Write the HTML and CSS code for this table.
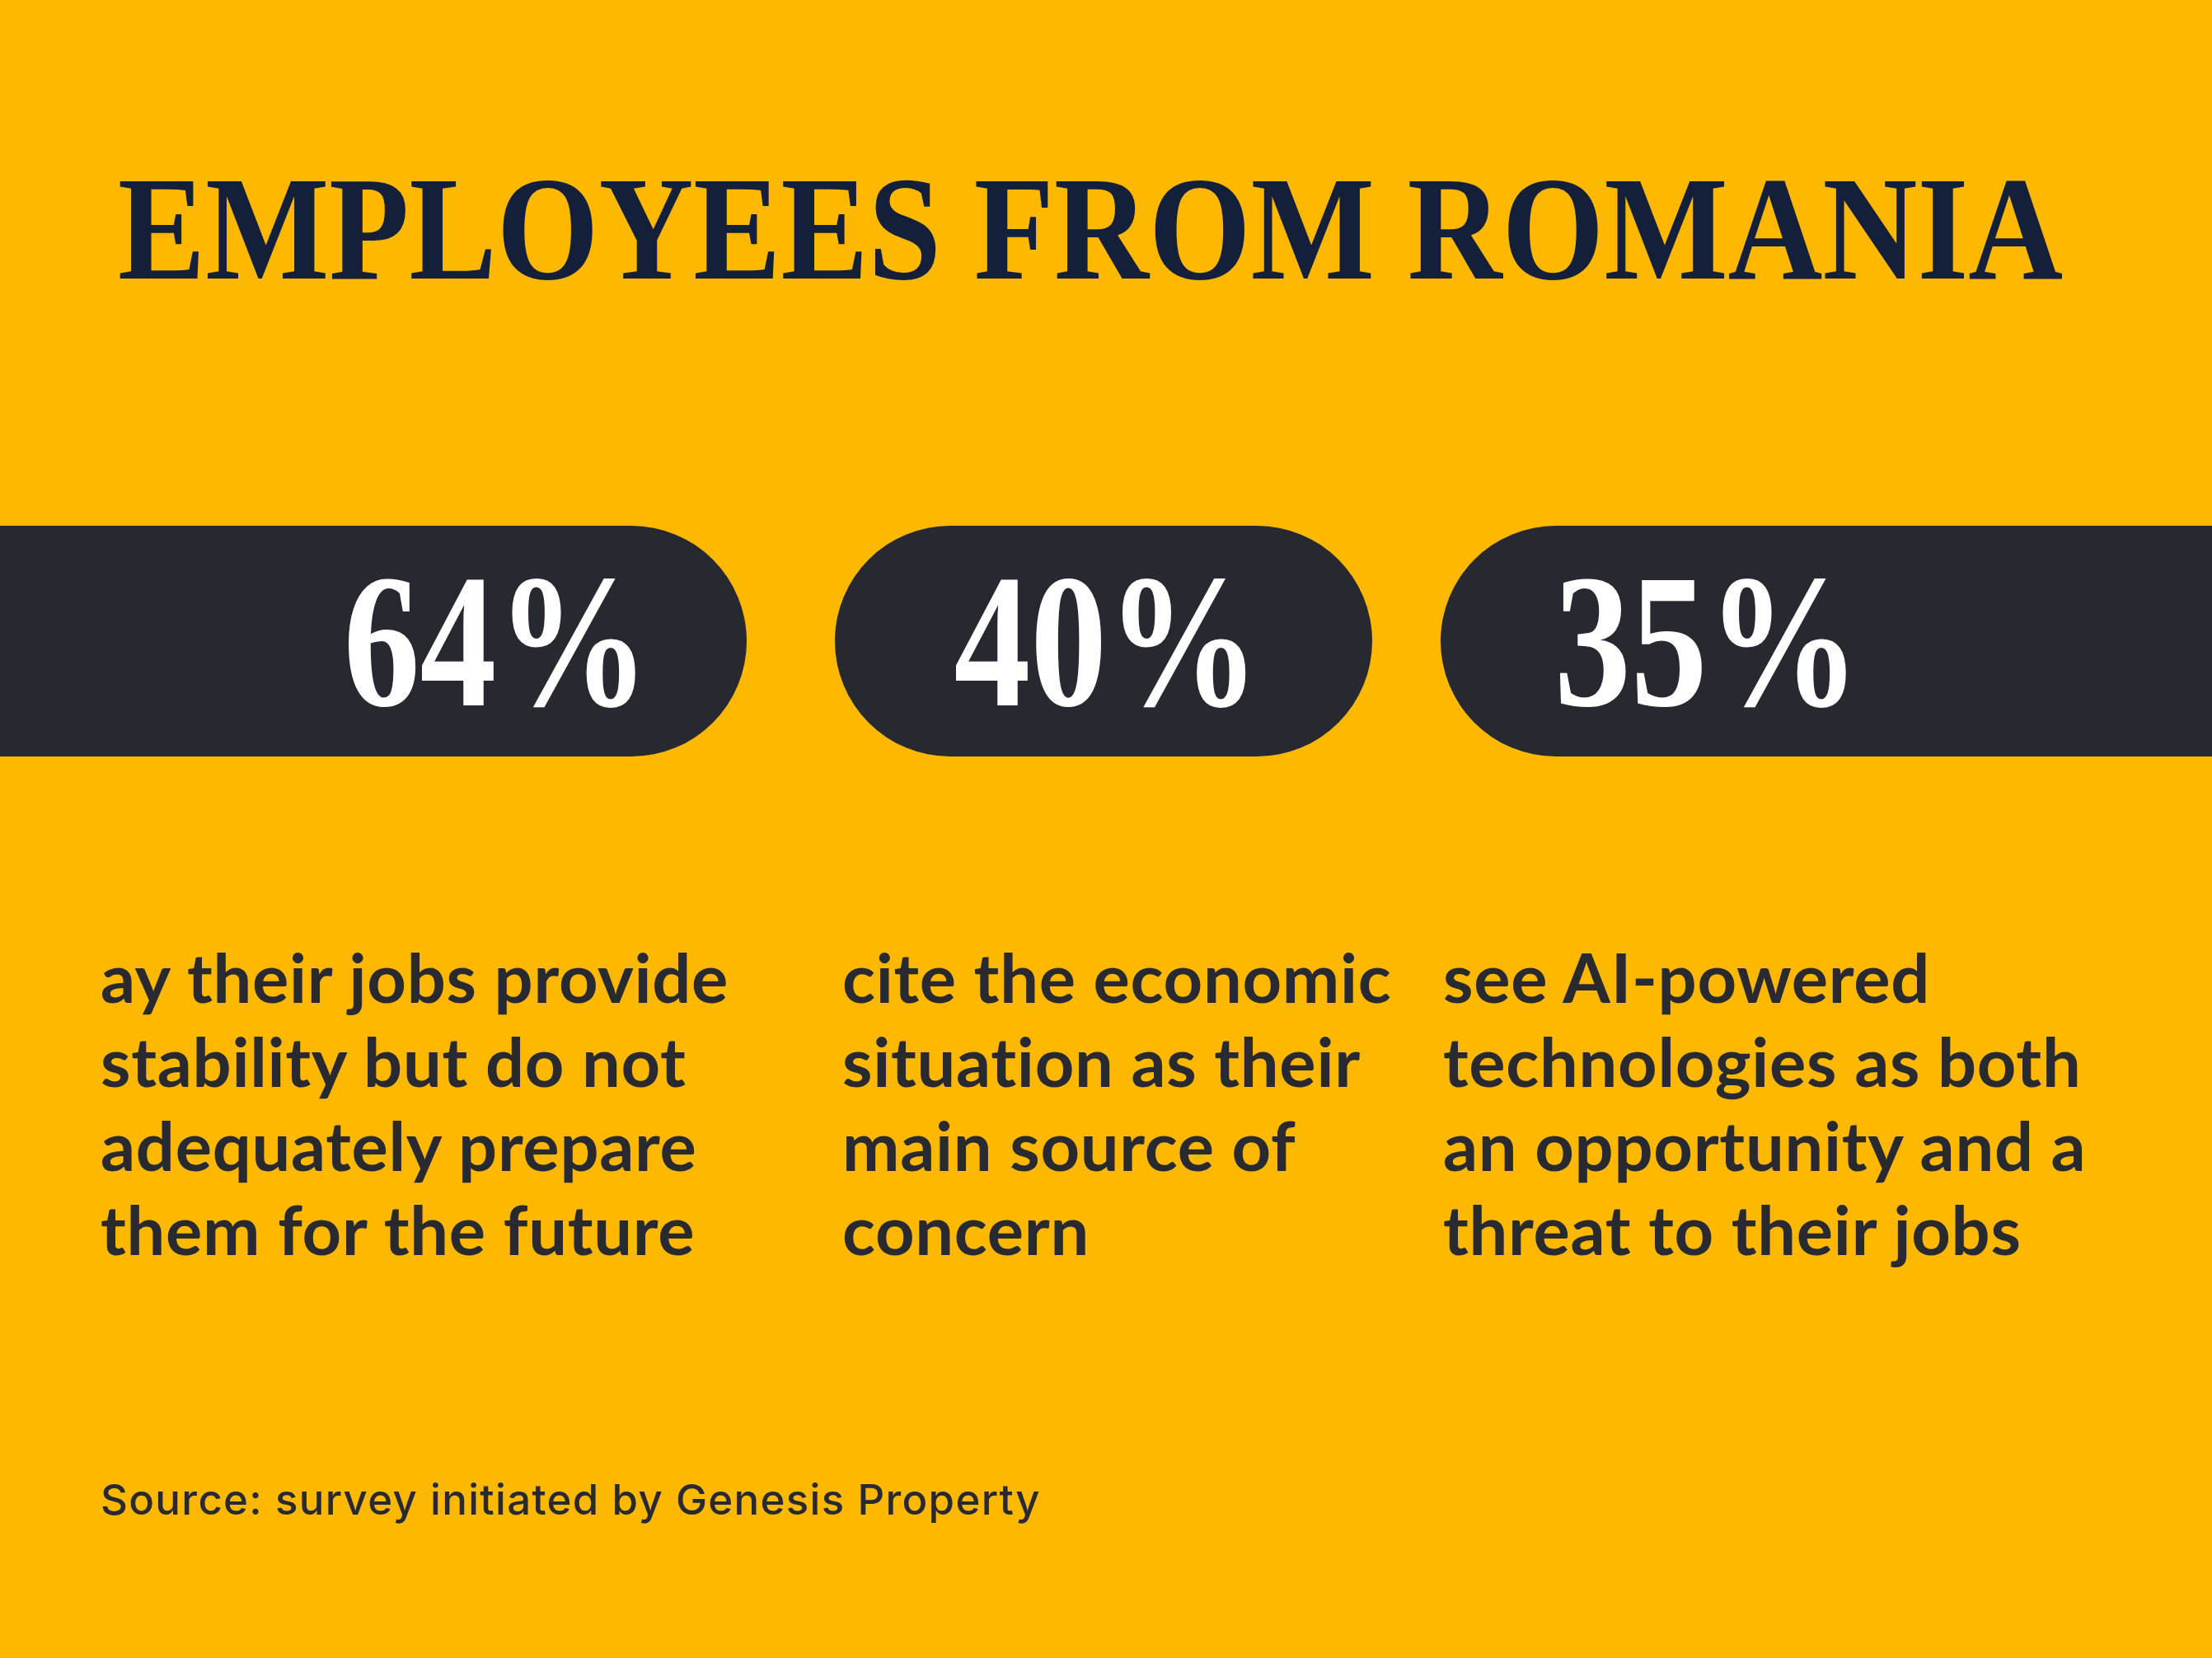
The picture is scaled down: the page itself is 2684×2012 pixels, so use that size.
FILE: index.html
```html
<!DOCTYPE html>
<html lang="en">
<head>
<meta charset="utf-8">
<title>Employees from Romania</title>
<link rel="stylesheet" href="styles.css">
</head>
<body>
<main class="page">
  <h1 class="title"><span class="title-text">EMPLOYEES FROM ROMANIA</span></h1>

  <section class="bars">
    <div class="bar bar-left"><span class="stat stat-right">64%</span></div>
    <div class="bar bar-mid"><span class="stat stat-center">40%</span></div>
    <div class="bar bar-right"><span class="stat stat-left">35%</span></div>
  </section>

  <section class="notes">
    <p class="note">ay their jobs provide<br>stability but do not<br>adequately prepare<br>them for the future</p>
    <p class="note">cite the economic<br>situation as their<br>main source of<br>concern</p>
    <p class="note">see AI-powered<br>technologies as both<br>an opportunity and a<br>threat to their jobs</p>
  </section>

  <p class="source">Source: survey initiated by Genesis Property</p>
</main>
</body>
</html>
```

FILE: styles.css
```css
html, body {
  margin: 0;
  padding: 0;
}

body {
  width: 2684px;
  height: 2012px;
  overflow: hidden;
  background: #FFB800;
}

.page {
  display: flex;
  flex-direction: column;
  padding-top: 188px;
}

.title {
  margin: 0;
  padding-left: 143px;
  height: 180px;
  font-family: "Liberation Serif", "Times New Roman", serif;
  font-weight: 700;
  font-size: 180px;
  line-height: 1;
  color: #14203A;
  white-space: nowrap;
}

.title-text {
  display: inline-block;
  transform: scaleX(0.884);
  transform-origin: left center;
}

.bars {
  display: flex;
  margin-top: 270px;
  height: 280px;
}

.bar {
  height: 280px;
  background: #262930;
  display: flex;
  align-items: center;
}

.bar-left {
  width: 906px;
  border-radius: 0 140px 140px 0;
  justify-content: flex-end;
  padding-right: 118px;
  box-sizing: border-box;
}

.bar-mid {
  width: 652px;
  margin-left: 107px;
  border-radius: 140px;
  justify-content: center;
  padding-left: 8px;
  box-sizing: border-box;
}

.bar-right {
  flex: 1;
  margin-left: 83px;
  border-radius: 140px 0 0 140px;
  justify-content: flex-start;
  padding-left: 138px;
}

.stat {
  display: inline-block;
  font-family: "Liberation Serif", "Times New Roman", serif;
  font-weight: 700;
  font-size: 232px;
  line-height: 1;
  color: #FFFFFF;
  transform: scaleX(0.8);
  white-space: nowrap;
}

.stat-right { transform-origin: right center; }
.stat-center { transform-origin: center center; }
.stat-left { transform-origin: left center; }

.notes {
  display: grid;
  grid-template-columns: 900px 729px 1fr;
  padding-left: 122px;
  margin-top: 216px;
}

.note {
  margin: 0;
  font-family: Lato, "Noto Sans", sans-serif;
  font-weight: 700;
  font-size: 83px;
  line-height: 102px;
  letter-spacing: 0.7px;
  font-variant-ligatures: none;
  color: #282A30;
  white-space: nowrap;
}

.source {
  margin: 247px 0 0 0;
  padding-left: 122px;
  font-family: Inter, Lato, "Noto Sans", sans-serif;
  font-weight: 500;
  font-size: 51px;
  line-height: 62px;
  letter-spacing: 1.3px;
  font-variant-ligatures: none;
  color: #282A30;
}
```
